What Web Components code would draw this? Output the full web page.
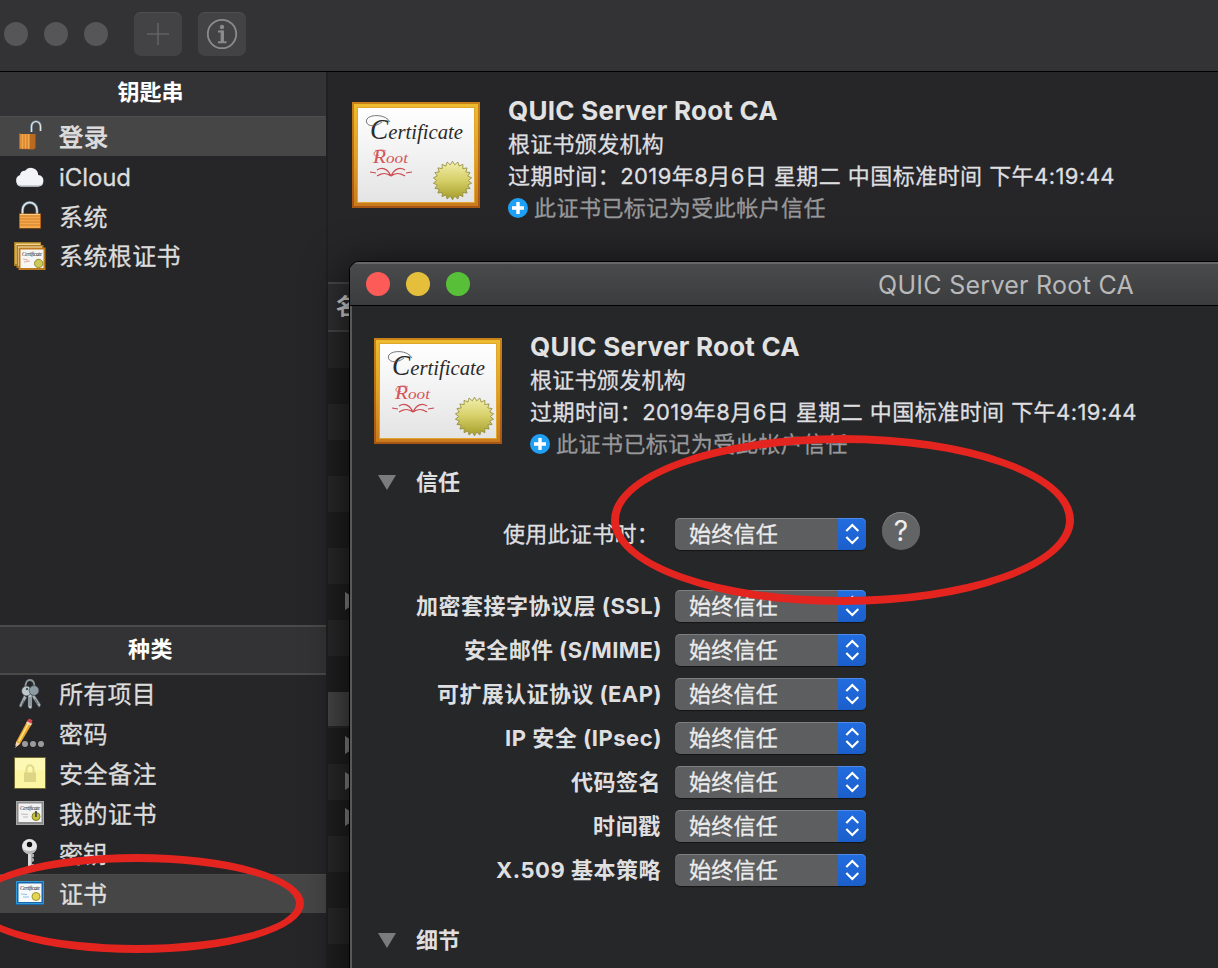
<!DOCTYPE html>
<html lang="zh-CN">
<head>
<meta charset="utf-8">
<title>QUIC Server Root CA</title>
<style>
html,body{margin:0;height:100%;overflow:hidden;background:#262628}
body{font-family:Inter,"Noto Sans CJK SC",sans-serif;color:#dfdfe0}
</style>
</head>
<body>
<keychain-app></keychain-app>
<script>
const define=(name,html,init)=>{
  const t=document.createElement('template');t.innerHTML=html;
  customElements.define(name,class extends HTMLElement{
    constructor(){super();this.attachShadow({mode:'open'}).append(t.content.cloneNode(true));}
    connectedCallback(){if(init&&!this.ready){this.ready=true;init.call(this,this.shadowRoot);}}
  });
};

/* One line of text whose tracking is set so that it fills the width in "w" */
define('ui-text',`<style>:host{display:block;white-space:pre}span{display:inline-block}</style><span></span>`,function(r){
  const s=r.querySelector('span'),txt=this.getAttribute('t'),w=+this.getAttribute('w');
  s.textContent=txt;
  const n=s.getBoundingClientRect().width;
  if(w&&n)s.style.letterSpacing=((w-n)/txt.length)+'px';
});

const ICONS={
unlock:`<g><path d="M31.500 13V7.500a4.500 5 0 0 1 9 0V12" fill="none" stroke="#718391" stroke-width="2.600"/><path d="M31.500 13V7.500a4.500 5 0 0 1 9 0V12" fill="none" stroke="#dfe6ea" stroke-width="1.200"/><path d="M19 14l2 1h14.500v14l-2 1.500-14.500-.5z" fill="#b8671a"/><path d="M20 15h10v14.500H20z" fill="#df8d35"/><path d="M30 15h5v13l-2 2h-3z" fill="#b96a20"/><path d="M22.500 15v15M25.500 15v15M28.500 15v15" stroke="#f0a850" stroke-width="1"/></g>`,
cloud:`<path d="M21 27.500a6 6 0 0 1-1-11.500 4.500 4.500 0 0 1 5-4.200 7.300 7.300 0 0 1 13.200 4.200 5.800 5.800 0 0 1 .3 11.500z" fill="#f3f4f7"/><path d="M16.500 25q2 2.500 5 2.500h17q3.500-.2 5-3-2 1.500-5 1.500H22q-3.500 0-5.500-1z" fill="#c9ccd3"/>`,
lock:`<path d="M22.500 16v-5a7.200 7.500 0 0 1 14.500 0v5" fill="none" stroke="#6e7e89" stroke-width="3"/><path d="M22.500 16v-5a7.200 7.500 0 0 1 14.500 0v5" fill="none" stroke="#dfe9ef" stroke-width="1.500"/><path d="M19 14.500h22v15H19z" fill="#b36418"/><path d="M20 15h20v14H20z" fill="#f5a94a"/><path d="M20 17h20M20 20h20M20 23h20M20 26h20" stroke="#cf7f2c"/><path d="M20 15.500h20" stroke="#ffd084"/>`,
certs:`<path d="M14 4h27v24H14z" fill="#a87e23"/><path d="M15.500 5.500h25V26h-25z" fill="#f0d68c"/><path d="M16.500 7h27v23h-27z" fill="#b07822"/><path d="M18 8.500h24V28H18z" fill="#fff0bd"/><path d="M18.500 9.500h27v22.500h-27z" fill="#bd7a1e"/><path d="M20.500 11.500h23v18.500h-23z" fill="#f6f6f4"/><text x="22" y="18" font-size="5.500" textLength="20" fill="#222">Certificate</text><path d="M23 21l5 1m-4 2l6-1" stroke="#e8a6a0"/><circle cx="38.700" cy="25.500" r="4.200" fill="#cbc957" stroke="#969136"/>`,
keys:`<g stroke="#333d43" stroke-width=".6"><path d="M25.500 9q0-7 4.500-7t4.500 7" fill="none" stroke="#8b999d" stroke-width="1.800"/><path d="M24 17l-5 11 2 1.500 6-10zM34 16l7 11-2 2.500-8-12z" fill="#a5b0b4"/><path d="M28 16h4v14l-2 1-2-2z" fill="#b9c4c8"/><circle cx="26.500" cy="13" r="4.900" fill="#bdc9cd"/><circle cx="34" cy="12.500" r="4.900" fill="#8d9ca3"/></g><circle cx="27" cy="11" r="1.200" fill="#465157"/><path d="M24 22l-2 5M35 21l3 5M30 19v9" stroke="#4e5b61" stroke-width=".8"/>`,
pencil:`<path d="M15 31l1-6L27.500 3.500l5 2.500L20 27z" fill="#e7a22f"/><path d="M18 24L28.500 4.500l1.500.8L19.500 25z" fill="#ffe17d"/><path d="M27 4.500L29 1.500l3.500 1.800-1.200 3.200z" fill="#d9424a"/><path d="M26.500 5.500l4.800 2.300" stroke="#e1dcda" stroke-width="1.600"/><path d="M15 31l1.300-6.200 3.500 2z" fill="#efd9be"/><path d="M15 31l.5-2.500 1 .6z" fill="#222"/><circle cx="25" cy="27" r="3" fill="#9b9b9d"/><circle cx="33" cy="27" r="3" fill="#9b9b9d"/><circle cx="41" cy="27" r="3" fill="#9b9b9d"/>`,
note:`<path d="M14.500 .5h31v31h-31z" fill="#fcf5a1" stroke="#6f6732"/><path d="M15 1h30v12H15z" fill="#fdf9b4"/><path d="M26.500 16v-4a3.500 3.800 0 0 1 7 0v4" fill="none" stroke="#e0d98b" stroke-width="2"/><path d="M24 15.500h12v9.500H24z" fill="#ddd586"/>`,
mycert:`<path d="M16 4h28v24H16z" fill="#8b8b8b"/><path d="M16.500 4.500h27v23h-27z" fill="none" stroke="#a8a8a8"/><path d="M18.500 6.500h23v18.500h-23z" fill="#f3f3f3"/><text x="20" y="12.500" font-size="5.500" textLength="20" fill="#222">Certificate</text><path d="M21 17l7 .5m-5 2.500h5" stroke="#bbb"/><circle cx="36" cy="19.500" r="4" fill="#c4c13d" stroke="#847f25"/><path d="M36 14v6" stroke="#555" stroke-width="2"/>`,
key:`<path d="M28 15h4v16l-2 2-2-2z" fill="#dadada"/><path d="M31 17h3v3h-2l2 2v2l-2 1v2h2v2h-3z" fill="#aaa"/><circle cx="29.500" cy="9.500" r="7.500" fill="#e8e8e8"/><path d="M22.500 12q7 4 14 0-2 5-7 5t-7-5z" fill="#b6b6b6"/><circle cx="29.500" cy="7.500" r="2.700" fill="#111"/>`,
cert:`<path d="M16 4h28v24H16z" fill="#1766ad"/><path d="M16.500 4.500h27v22h-27z" fill="none" stroke="#319bd5"/><path d="M18.500 6.500h23v18.500h-23z" fill="#f6f8f9"/><text x="20" y="12.500" font-size="5.500" textLength="20" fill="#111">Certificate</text><path d="M21 17l6 .5m-4 2.500h6" stroke="#8fc4ea"/><circle cx="36" cy="19.500" r="4" fill="#e3d653" stroke="#a4962b"/>`
};

define('side-row',`<style>
:host{display:flex;align-items:center;height:40px;color:#dcdcdd}
:host([sel]){background:linear-gradient(#4c4c4c,#4c4c4c) 0 0/100% 1px no-repeat,#464646}
svg{width:60px;height:34px;flex:none;font-family:"Liberation Serif";font-style:italic}
ui-text{font-size:24px;line-height:36px;-webkit-text-stroke:.3px;padding-top:var(--drop,2px);margin-left:-1px}
:host([strong]) ui-text{-webkit-text-stroke:.9px}
</style><svg viewBox="0 0 60 34"></svg><ui-text></ui-text>`,function(r){
  r.querySelector('svg').innerHTML=ICONS[this.getAttribute('icon')];
  const o=r.querySelector('ui-text'),n=document.createElement('ui-text');
  n.setAttribute('t',this.getAttribute('t'));n.setAttribute('w',this.getAttribute('w'));
  o.replaceWith(n);
});

define('side-head',`<style>
:host{display:flex;justify-content:center;height:44px;background:#333335;color:#fff;box-sizing:border-box;
font:700 22px/41px Inter,"Noto Sans CJK SC",sans-serif;padding-right:25px}
:host([ruled]){height:50px;line-height:45px;border-top:2px solid #4a4a4b;border-bottom:2px solid #4a4a4b}
</style><slot></slot>`);

define('side-bar',`<style>
:host{display:flex;flex-direction:column;width:326px;flex:none;background:#262628;border-right:2px solid #202022}
.top{height:553px;flex:none;--drop:4px}
</style>
<div class="top">
<side-head><ui-text t="钥匙串" w="66"></ui-text></side-head>
<side-row sel strong icon="unlock" t="登录" w="50"></side-row>
<side-row icon="cloud" t="iCloud" w="72"></side-row>
<side-row icon="lock" t="系统" w="49"></side-row>
<side-row icon="certs" t="系统根证书" w="122" style="height:38px;--drop:3px"></side-row>
</div>
<side-head ruled><ui-text t="种类" w="45"></ui-text></side-head>
<side-row icon="keys" t="所有项目" w="97" style="height:39px;--drop:1px"></side-row>
<side-row icon="pencil" t="密码" w="49"></side-row>
<side-row icon="note" t="安全备注" w="98"></side-row>
<side-row icon="mycert" t="我的证书" w="98"></side-row>
<side-row icon="key" t="密钥" w="48"></side-row>
<side-row icon="cert" t="证书" w="48" sel style="height:39px"></side-row>`);

define('cert-image',`<style>:host{display:block;width:128px;height:106px;flex:none}svg{display:block;font-family:"Liberation Serif";font-style:italic}</style>
<svg width="128" height="106" viewBox="0 0 128 106">
<defs><linearGradient id="f" x2="0" y2="1"><stop stop-color="#edbc2d"/><stop offset=".5" stop-color="#e0a127"/><stop offset="1" stop-color="#c97a1e"/></linearGradient>
<linearGradient id="e" x2="0" y2="1"><stop stop-color="#c98219"/><stop offset="1" stop-color="#a85613"/></linearGradient>
<linearGradient id="p" x2="0" y2="1"><stop stop-color="#fff"/><stop offset="1" stop-color="#e4e4e4"/></linearGradient>
<linearGradient id="s" x2="0" y2="1"><stop stop-color="#f3efad"/><stop offset=".5" stop-color="#d5cf68"/><stop offset="1" stop-color="#a49b27"/></linearGradient></defs>
<path d="M0 0h128v106H0z" fill="url(#e)"/><path d="M2 2h124v102H2z" fill="url(#f)"/><path d="M5 5h118v96H5z" fill="#dfa52e"/><path d="M6 6h116v94H6z" fill="url(#p)"/>
<text x="18" y="37" font-size="22" fill="#2b2b2b" textLength="93" lengthAdjust="spacingAndGlyphs"><tspan font-size="29">C</tspan>ertificate</text>
<path d="M38 20C34 12 18 12 15 17c-3 6 6 10 15 3" fill="none" stroke="#555" stroke-width=".8"/>
<text x="21" y="60.500" font-size="15" fill="#d4555a" textLength="35" lengthAdjust="spacingAndGlyphs"><tspan font-size="18.500">R</tspan>oot</text>
<path d="M34 49c-4-2-11-1-12 2-.5 3 3 4 5 2" fill="none" stroke="#d4555a" stroke-width=".8"/>
<g fill="none" stroke="#cc4a50" stroke-width="1.200"><path d="M39 74c-4-8-9-9-14-6M39 74c4-8 9-9 14-6M39 74c-5-4-9-3-14 0M39 74c5-4 9-3 14 0M18 70l6 1M60 70l-6 1"/></g>
<path id="seal" fill="url(#s)" stroke="#8f8938" stroke-width=".8"/></svg>`,function(r){
  const n=22,pts=[];
  for(let i=0;i<n*2;i++){const a=Math.PI*i/n,R=i%2?15.800:19.300;pts.push((100.500+R*Math.sin(a)).toFixed(1)+' '+(78.500-R*Math.cos(a)).toFixed(1));}
  r.getElementById('seal').setAttribute('d','M'+pts.join('L')+'z');
});

define('cert-summary',`<style>
:host{display:flex;gap:28px;height:106px}
.c{display:flex;flex-direction:column;margin-top:-9px}
.n{font-weight:700;font-size:26px;line-height:36px;color:#e2e2e3;margin-bottom:-1px}
.l{font-size:22px;line-height:32px;-webkit-text-stroke:.3px}
.s{display:flex;align-items:center;gap:6px;color:#98989a}
svg{width:20px;height:20px}
</style><cert-image></cert-image><div class="c">
<ui-text class="n" t="QUIC Server Root CA" w="270"></ui-text>
<ui-text class="l" t="根证书颁发机构" w="156"></ui-text>
<ui-text class="l" t="过期时间：2019年8月6日 星期二 中国标准时间 下午4:19:44" w="607"></ui-text>
<div class="s l"><svg viewBox="0 0 20 20"><circle cx="10" cy="10" r="10" fill="#20a0f5"/><path d="M10 4v12M4 10h12" stroke="#fff" stroke-width="3.400"/></svg><ui-text t="此证书已标记为受此帐户信任" w="292"></ui-text></div></div>`);

define('tool-bar',`<style>
:host{display:flex;align-items:center;height:71px;box-sizing:border-box;background:#333335;padding:0 0 3px 4px}
i{width:24px;height:24px;border-radius:50%;background:#565658;margin-right:16px}
b{width:48px;height:44px;border-radius:7px;background:#434345;box-shadow:inset 0 1px #4e4e50;margin-right:16px}
i+b{margin-left:10px}svg{display:block}
</style><i></i><i></i><i></i>
<b><svg width="48" height="44"><path d="M24 11v22M13 22h22" stroke="#626264" stroke-width="1.600"/></svg></b>
<b><svg width="48" height="44" fill="none" stroke="#8b8b8c"><circle cx="24" cy="22" r="14.200" stroke-width="1.800"/><path d="M20 19.500h4.500M20 30.200h8.500" stroke-width="2"/><path d="M24.300 18.500v12" stroke-width="3.400"/><circle cx="24" cy="15" r="2.200" fill="#8b8b8c" stroke="none"/></svg></b>`);

define('item-table',`<style>
:host{display:block;overflow:hidden}
.h{height:50px;box-sizing:border-box;border:solid #48484a;border-width:2px 0;background:#303032;padding-left:8px;font-weight:600;font-size:22px;line-height:44px;color:#dcdcdd}
.r{height:36px;background:#202021}.r:nth-child(odd){background:#29292a}
.r.sel{background:linear-gradient(#484848 0 34px,#29292a 34px)}
svg{display:block;padding:8px 0 0 17px}
</style><div class="h">名称</div>`,function(r){
  for(let i=0;i<18;i++){const d=document.createElement('div');d.className='r'+(i===10?' sel':'');
    if([7,11,12,13].includes(i))d.innerHTML='<svg width="16" height="18"><path d="M0 0l14 9-14 9z" fill="#8a8a8b"/></svg>';
    r.append(d);}
});

define('main-pane',`<style>:host{display:block;flex:1;min-width:0;background:#262628}
cert-summary{padding:30px 0 74px 24px}</style><cert-summary></cert-summary><item-table></item-table>`);

define('pop-up',`<style>
:host{display:flex;width:191px;height:32px;border-radius:5px;overflow:hidden;background:#5d5e60;box-shadow:0 1px 1px #151516;color:#ececec}
ui-text{flex:1;padding-left:14px;font-size:22px;line-height:33px;-webkit-text-stroke:.3px}
svg{width:28px;height:32px;background:linear-gradient(#226de0,#1b5fcb)}
:host::before{content:"";position:absolute;width:191px;height:32px;border-radius:5px;box-shadow:inset 0 1px #ffffff33}
</style><ui-text t="始终信任" w="89"></ui-text>
<svg viewBox="0 0 28 32"><path d="M8.300 13l6-6 6 6M8.300 19l6 6 6-6" fill="none" stroke="#fff" stroke-width="2.200"/></svg>`);

define('trust-row',`<style>
:host{display:flex;align-items:center;height:44px}
.l{display:flex;justify-content:flex-end;width:309px;margin-right:14px;font-weight:700;font-size:22px;padding-bottom:4px}
:host([tail]) .l{width:310px;margin-right:13px}
:host([plain]) .l{font-weight:400;width:307px;margin-right:16px;-webkit-text-stroke:.3px}
</style><div class="l"></div><pop-up></pop-up><slot></slot>`,function(r){
  const n=document.createElement('ui-text');n.setAttribute('t',this.getAttribute('t'));n.setAttribute('w',this.getAttribute('w'));
  r.querySelector('.l').append(n);
});

define('help-button',`<style>:host{display:block;width:38px;height:38px;border-radius:50%;background:#636466;box-shadow:inset 0 1px #818284;font-size:28px;line-height:38px;text-align:center;color:#eee;margin:0 0 6px 16px}</style>?`);

define('section-head',`<style>:host{display:flex;align-items:center;height:32px;font-weight:700;font-size:22px;gap:20px;padding-left:28px}slot{display:block;padding-bottom:4px}</style>
<svg width="18" height="15"><path d="M0 0h18l-9 15z" fill="#7b7c7e"/></svg><slot></slot>`);

define('cert-window',`<style>
:host{display:block;box-sizing:border-box;background:#262729;border:1px solid #000;border-radius:10px 10px 0 0;box-shadow:0 8px 40px 4px #000a;overflow:hidden}
.in{height:100%;box-shadow:inset 2px 0 #58595b}
header{display:grid;grid-template-columns:1fr auto 1fr;align-items:center;height:44px;box-sizing:border-box;background:linear-gradient(#4a4b4d,#3b3c3e);border-bottom:1px solid #000;box-shadow:inset 0 2px #666769;font-size:25px;color:#b9b9ba}
header ui-text{padding:3px 0 0 1px}
.d{display:flex;gap:16px;padding-left:16px}i{width:24px;height:24px;border-radius:50%;background:#fc5b57}i+i{background:#e5bf3c}i+i+i{background:#57c038}
cert-summary{padding:32px 0 22px 24px}
.rows{display:flex;flex-direction:column;padding-left:2px}
trust-row[plain]{margin:14px 0 28px}
.sub{font-weight:700;font-size:22px;line-height:32px;padding:7px 0 0 119px}
</style>
<div class="in">
<header><div class="d"><i></i><i></i><i></i></div><ui-text t="QUIC Server Root CA" w="256"></ui-text><span></span></header>
<cert-summary></cert-summary>
<section-head><ui-text t="信任" w="44"></ui-text></section-head>
<div class="rows">
<trust-row plain t="使用此证书时：" w="156"><help-button></help-button></trust-row>
<trust-row tail t="加密套接字协议层 (SSL)" w="246"></trust-row>
<trust-row tail t="安全邮件 (S/MIME)" w="198"></trust-row>
<trust-row tail t="可扩展认证协议 (EAP)" w="225"></trust-row>
<trust-row tail t="IP 安全 (IPsec)" w="157"></trust-row>
<trust-row t="代码签名" w="90"></trust-row>
<trust-row t="时间戳" w="68"></trust-row>
<trust-row t="X.509 基本策略" w="165"></trust-row>
</div>
<section-head style="margin-top:32px"><ui-text t="细节" w="44"></ui-text></section-head>
<ui-text class="sub" t="主题名称" w="89"></ui-text>
</div>`);

define('red-ellipse',`<style>:host{display:block;box-sizing:border-box;border:8px solid #e4251f;border-radius:50%}</style>`);

define('keychain-app',`<style>
:host{display:flex;flex-direction:column;position:relative;width:1218px;height:968px;overflow:hidden}
.b{display:flex;flex:1;min-height:0;padding-top:1px;background:#000}
.b>*{height:896px}
cert-window{position:absolute;left:349px;top:261px;width:1313px;height:720px}
red-ellipse{position:absolute}
</style><tool-bar></tool-bar><div class="b"><side-bar></side-bar><main-pane></main-pane></div>
<cert-window></cert-window>
<red-ellipse style="left:611px;top:435px;width:463px;height:170px"></red-ellipse>
<red-ellipse style="left:-30px;top:854px;width:334px;height:99px"></red-ellipse>`);
</script>
</body>
</html>
